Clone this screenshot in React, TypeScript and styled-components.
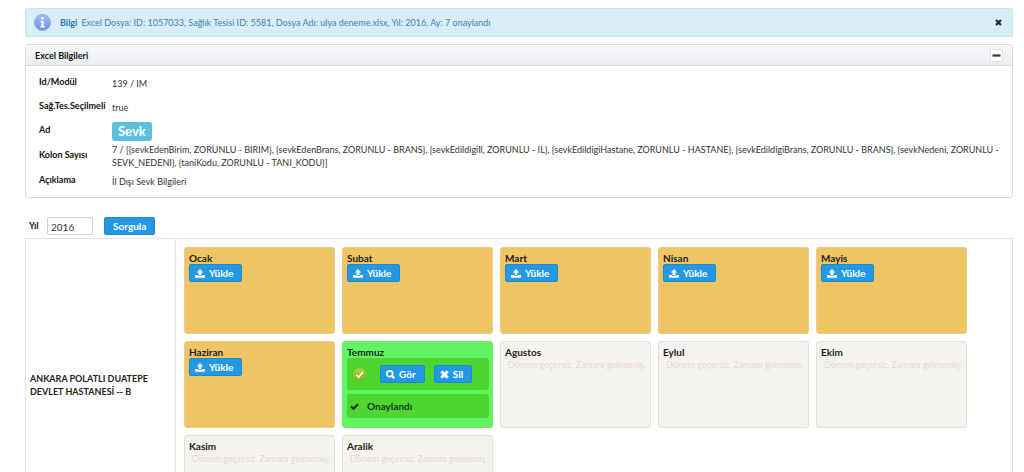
import React from "react";
import styled, { createGlobalStyle, css } from "styled-components";

const GlobalStyle = createGlobalStyle`
  *, *::before, *::after { box-sizing: border-box; }
  body {
    margin: 0;
    background: #fff;
    color: #333;
    font-family: Lato, "Liberation Sans", sans-serif;
    font-size: 9px;
    line-height: 13px;
  }
  button, input { font: inherit; }
`;

const Page = styled.main`
  padding: 8px 11px 8px 25px;
`;

const Message = styled.div`
  display: flex;
  align-items: center;
  gap: 9px;
  height: 29px;
  padding: 0 9px 0 8px;
  border: 1px solid #c5e6ee;
  border-radius: 2px;
  background: #d9edf7;
  color: #4384ab;
`;

const MessageText = styled.p`
  flex: 1;
  margin: 0;
`;

const MessageTitle = styled.strong`
  margin-right: 4px;
  font-weight: 700;
  color: #2779ab;
`;

const PlainButton = styled.button`
  display: grid;
  place-items: center;
  width: 10px;
  height: 12px;
  padding: 0;
  border: 0;
  background: none;
  color: #1c2b3a;
`;

const Panel = styled.section`
  margin-top: 7px;
  border: 1px solid #d9d9d9;
  border-radius: 3px;
`;

const PanelHeader = styled.header`
  display: flex;
  align-items: center;
  justify-content: space-between;
  height: 21px;
  padding: 0 9px;
  border-bottom: 1px solid #d9d9d9;
  background: linear-gradient(#f6f7f9, #ebedf0);
`;

const PanelTitle = styled.h2`
  margin: 0;
  font-size: 9px;
  font-weight: 700;
  color: #111;
`;

const ToggleButton = styled(PlainButton)`
  width: 13px;
  height: 13px;
  border: 1px solid #dedede;
  border-radius: 2px;
  background: #fff;
  color: #333;
`;

const Details = styled.dl`
  margin: 0;
  padding: 5px 13px 4px;
`;

const DetailRow = styled.div`
  display: grid;
  grid-template-columns: 73px 1fr;
  align-items: center;
  min-height: 24px;
`;

const DetailLabel = styled.dt`
  padding-bottom: 4px;
  font-weight: 700;
  color: #111;
  white-space: nowrap;
`;

const DetailValue = styled.dd`
  margin: 0;
`;

const Badge = styled.span`
  display: block;
  width: fit-content;
  padding: 2px 6px;
  border-radius: 3px;
  background: #5bc0de;
  color: #fff;
  font-size: 13px;
  line-height: 15px;
  font-weight: 700;
`;

const Filter = styled.form`
  display: flex;
  align-items: center;
  margin-top: 19px;
  padding: 0 4px 3px;
`;

const FilterLabel = styled.label`
  width: 18px;
  padding-bottom: 2px;
  font-weight: 700;
  color: #111;
`;

const YearInput = styled.input`
  width: 46px;
  height: 18px;
  padding: 2px 3px 0;
  border: 1px solid #d0d0d0;
  border-radius: 2px;
  background: #fff;
  color: #333;
  font-size: 10px;
`;

const Button = styled.button`
  display: inline-flex;
  align-items: center;
  justify-content: center;
  gap: 4px;
  height: 18px;
  padding: 0 8px 0 5px;
  border: 1px solid #1f89ce;
  border-radius: 2px;
  background: #2399e5;
  color: #fff;
  font-size: 10px;
  font-weight: 700;
`;

const QueryButton = styled(Button)`
  margin-left: 11px;
  padding: 0 8px;
`;

const Schedule = styled.table`
  width: 100%;
  border-collapse: collapse;
  border: 1px solid #e2e2e2;
`;

const Facility = styled.th`
  width: 150px;
  padding: 0 4px;
  border-right: 1px solid #e2e2e2;
  text-align: left;
  font-weight: 700;
  color: #222;
`;

const MonthsCell = styled.td`
  padding: 8px;
`;

const Months = styled.ul`
  display: flex;
  flex-wrap: wrap;
  gap: 7px;
  margin: 0;
  padding: 0;
  list-style: none;
`;

type Status = "open" | "approved" | "future";

const cardColors = {
  open: css`background: #efc462; border-color: #e8cb90;`,
  approved: css`background: #62f362; border-color: #6eed6e;`,
  future: css`background: #f4f3ee; border-color: #e0dfdb;`,
};

const Card = styled.li<{ $status: Status }>`
  width: 151px;
  height: 87px;
  padding: 4px 3px 4px 4px;
  border: 1px solid;
  border-radius: 3px;
  ${({ $status }) => cardColors[$status]}
`;

const Month = styled.h3`
  margin: 0;
  font-size: 10px;
  line-height: 12px;
  font-weight: 700;
  color: #222;
`;

const Note = styled.p`
  margin: 0;
  padding-left: 3px;
  color: #e6d6d0;
  white-space: nowrap;
`;

const Actions = styled.div`
  display: flex;
  align-items: center;
  gap: 9px;
  height: 32px;
  padding: 0 6px;
  border-radius: 3px;
  background: #4cd62f;
`;

const Approval = styled(Actions)`
  gap: 8px;
  height: 24px;
  margin-top: 4px;
  padding: 0 3px;
  color: #1f3a1a;
  font-size: 10px;
  font-weight: 700;
`;

const GreenDot = styled.svg`
  margin-right: 5px;
`;

const InfoIcon = () => (
  <svg width="17" height="17" viewBox="0 0 17 17" aria-hidden="true">
    <defs>
      <linearGradient id="info" x1="0" y1="0" x2="0" y2="1">
        <stop offset="0" stopColor="#a3bdf0" />
        <stop offset="1" stopColor="#7390e2" />
      </linearGradient>
    </defs>
    <circle cx="8.5" cy="8.5" r="8" fill="url(#info)" stroke="#8ca8e6" />
    <circle cx="8.5" cy="4.2" r="1.5" fill="#f4f8ff" />
    <path d="M6.4 6.7h3.4v5.6h1.2v1.3H6.2v-1.3h1.2V8H6.4z" fill="#f4f8ff" />
  </svg>
);

const CrossIcon = ({ size = 8 }: { size?: number }) => (
  <svg width={size} height={size} viewBox="0 0 8 8" aria-hidden="true">
    <path d="M1.2 1.2l5.6 5.6M6.8 1.2L1.2 6.8" stroke="currentColor" strokeWidth="2.6" />
  </svg>
);

const MinusIcon = () => (
  <svg width="9" height="3" viewBox="0 0 9 3" aria-hidden="true">
    <path d="M.5 1.5h8" stroke="currentColor" strokeWidth="2.2" />
  </svg>
);

const UploadIcon = () => (
  <svg width="10" height="9" viewBox="0 0 10 9" aria-hidden="true">
    <path d="M5 0l3.3 3.5H6.3V6H3.7V3.5h-2z" fill="currentColor" />
    <path d="M.3 5.9h2.9v.9h3.6v-.9h2.9q.3 0 .3.3v2.1q0 .4-.4.4H.4Q0 8.7 0 8.3V6.2q0-.3.3-.3z" fill="currentColor" />
  </svg>
);

const SearchIcon = () => (
  <svg width="9" height="9" viewBox="0 0 9 9" aria-hidden="true">
    <circle cx="3.8" cy="3.8" r="2.9" fill="none" stroke="currentColor" strokeWidth="1.7" />
    <path d="M6 6l2.4 2.4" stroke="currentColor" strokeWidth="2" />
  </svg>
);

const CheckIcon = () => (
  <svg width="9" height="8" viewBox="0 0 9 8" aria-hidden="true">
    <path d="M.9 4.3l2.5 2.5L8.1 2.1" fill="none" stroke="currentColor" strokeWidth="2.2" />
  </svg>
);

const ApprovedIcon = () => (
  <GreenDot width="13" height="13" viewBox="0 0 13 13" aria-hidden="true">
    <defs>
      <linearGradient id="approved" x1="0" y1="0" x2="0" y2="1">
        <stop offset="0" stopColor="#b9cf4d" />
        <stop offset="1" stopColor="#79b812" />
      </linearGradient>
    </defs>
    <circle cx="6.5" cy="6.5" r="6.2" fill="url(#approved)" />
    <path d="M3.3 6.8l2.3 2.4L10 4" fill="none" stroke="#fff" strokeWidth="1.6" />
  </GreenDot>
);

const details: [string, React.ReactNode][] = [
  ["Id/Modül", "139 / IM"],
  ["Sağ.Tes.Seçilmeli", "true"],
  ["Ad", <Badge>Sevk</Badge>],
  [
    "Kolon Sayısı",
    "7 / [{sevkEdenBirim, ZORUNLU - BIRIM}, {sevkEdenBrans, ZORUNLU - BRANS}, {sevkEdildigiIl, ZORUNLU - IL}, {sevkEdildigiHastane, ZORUNLU - HASTANE}, {sevkEdildigiBrans, ZORUNLU - BRANS}, {sevkNedeni, ZORUNLU - SEVK_NEDENI}, {taniKodu, ZORUNLU - TANI_KODU}]",
  ],
  ["Açıklama", "İl Dışı Sevk Bilgileri"],
];

const months: [string, Status][] = [
  ["Ocak", "open"],
  ["Subat", "open"],
  ["Mart", "open"],
  ["Nisan", "open"],
  ["Mayis", "open"],
  ["Haziran", "open"],
  ["Temmuz", "approved"],
  ["Agustos", "future"],
  ["Eylul", "future"],
  ["Ekim", "future"],
  ["Kasim", "future"],
  ["Aralik", "future"],
];

const MonthContent = ({ status }: { status: Status }) => {
  if (status === "open") {
    return (
      <Button type="button">
        <UploadIcon />
        Yükle
      </Button>
    );
  }
  if (status === "future") {
    return <Note>Dönem geçersiz. Zamanı gelmemiş.</Note>;
  }
  return (
    <>
      <Actions>
        <ApprovedIcon />
        <Button type="button">
          <SearchIcon />
          Gör
        </Button>
        <Button type="button">
          <CrossIcon size={9} />
          Sil
        </Button>
      </Actions>
      <Approval>
        <CheckIcon />
        Onaylandı
      </Approval>
    </>
  );
};

export default function App() {
  return (
    <>
      <GlobalStyle />
      <Page>
        <Message role="status">
          <InfoIcon />
          <MessageText>
            <MessageTitle>Bilgi</MessageTitle>
            Excel Dosya: ID: 1057033, Sağlık Tesisi ID: 5581, Dosya Adı: ulya deneme.xlsx, Yıl: 2016, Ay: 7 onaylandı
          </MessageText>
          <PlainButton type="button" aria-label="Kapat">
            <CrossIcon size={7} />
          </PlainButton>
        </Message>
        <Panel>
          <PanelHeader>
            <PanelTitle>Excel Bilgileri</PanelTitle>
            <ToggleButton type="button" aria-label="Daralt">
              <MinusIcon />
            </ToggleButton>
          </PanelHeader>
          <Details>
            {details.map(([label, value]) => (
              <DetailRow key={label}>
                <DetailLabel>{label}</DetailLabel>
                <DetailValue>{value}</DetailValue>
              </DetailRow>
            ))}
          </Details>
        </Panel>
        <Filter onSubmit={(event) => event.preventDefault()}>
          <FilterLabel htmlFor="year">Yıl</FilterLabel>
          <YearInput id="year" defaultValue="2016" />
          <QueryButton type="submit">Sorgula</QueryButton>
        </Filter>
        <Schedule>
          <tbody>
            <tr>
              <Facility scope="row">ANKARA POLATLI DUATEPE DEVLET HASTANESİ -- B</Facility>
              <MonthsCell>
                <Months>
                  {months.map(([name, status]) => (
                    <Card key={name} $status={status}>
                      <Month>{name}</Month>
                      <MonthContent status={status} />
                    </Card>
                  ))}
                </Months>
              </MonthsCell>
            </tr>
          </tbody>
        </Schedule>
      </Page>
    </>
  );
}
